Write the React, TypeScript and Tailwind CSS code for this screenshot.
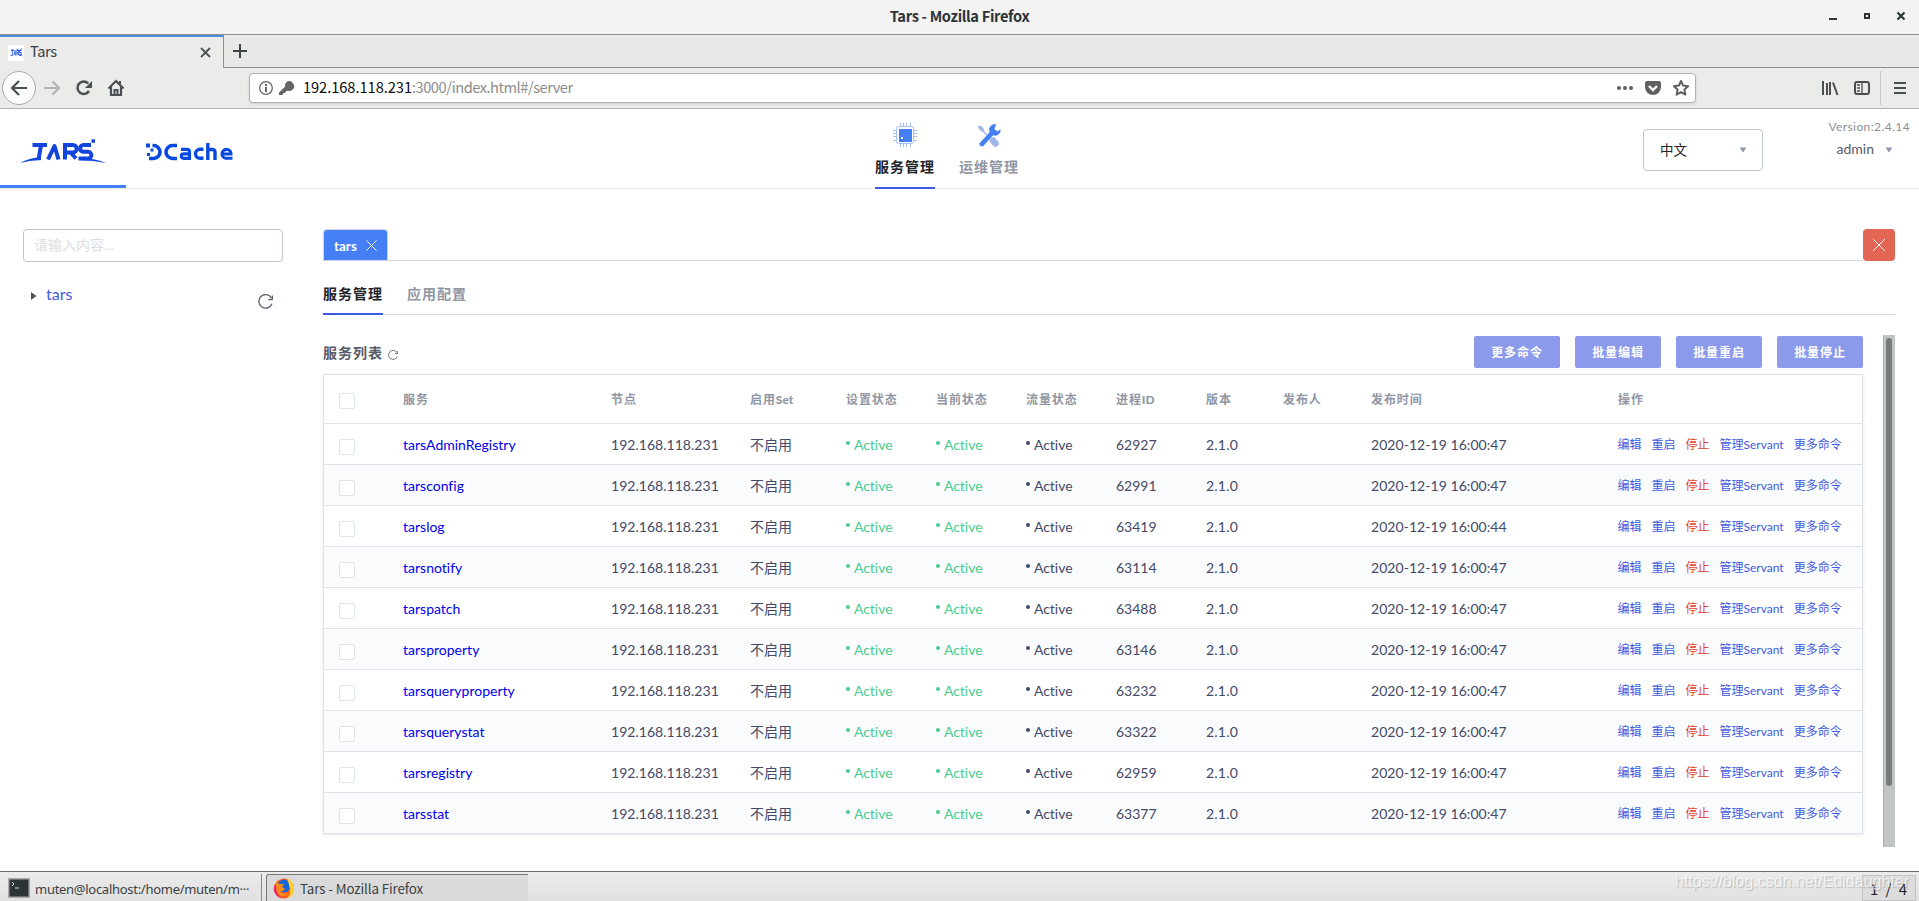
import { ReactNode } from "react";

const rows = [
  ["tarsAdminRegistry", "62927", "47"],
  ["tarsconfig", "62991", "47"],
  ["tarslog", "63419", "44"],
  ["tarsnotify", "63114", "47"],
  ["tarspatch", "63488", "47"],
  ["tarsproperty", "63146", "47"],
  ["tarsqueryproperty", "63232", "47"],
  ["tarsquerystat", "63322", "47"],
  ["tarsregistry", "62959", "47"],
  ["tarsstat", "63377", "47"],
];

const grid =
  "grid grid-cols-[79px_208px_139px_96px_90px_90px_90px_90px_77px_88px_247px_1fr] items-center";

function TitleBar() {
  return (
    <div className="relative flex h-[35px] items-center justify-center border-b border-[#8e8f86] bg-[#f3f3f3] pb-[3px]">
      <span className="font-['Noto_Sans_CJK_SC',sans-serif] text-[14.67px] font-bold leading-5 tracking-[-0.33px] text-[#2e3436]">
        Tars - Mozilla Firefox
      </span>
      <svg className="absolute right-0 top-0" width="100" height="33" fill="none" stroke="#2e3436">
        <path d="M10 19h8" strokeWidth="2" />
        <rect x="46" y="14" width="4" height="4" strokeWidth="2" />
        <path d="M78.500 12.500l7 7M85.500 12.500l-7 7" strokeWidth="2.200" />
      </svg>
    </div>
  );
}

function BrowserTabs() {
  return (
    <div className="flex h-[33px] bg-[#e8e8e7]">
      <div className="flex w-[223px] items-center border-t-2 border-[#4a90d9] bg-[#ebebea] pl-2">
        <span className="flex h-4 w-4 items-center justify-center bg-white">
          <TarsLogo width={15} height={9} />
        </span>
        <span className="mb-[3px] ml-[6px] flex-1 font-['Noto_Sans_CJK_SC',sans-serif] text-[14.67px] leading-5 tracking-[-0.4px] text-[#3a3f42]">
          Tars
        </span>
        <svg className="mr-3" width="11" height="11" stroke="#4d5256" strokeWidth="1.800">
          <path d="M1 1l9 9M10 1l-9 9" />
        </svg>
      </div>
      <div className="flex-1 border-b border-l border-[#8e8f86] pl-[9px] pt-[9px]">
        <svg width="14" height="14" stroke="#3f4548" strokeWidth="2">
          <path d="M7 0v14M0 7h14" />
        </svg>
      </div>
    </div>
  );
}

function Toolbar() {
  return (
    <div className="flex h-[41px] items-center border-b border-[#b4b4ae] bg-[#ebebea] pl-[2px] text-[#4a4f52]">
      <svg width="130" height="36" fill="none" stroke="currentColor" strokeWidth="2.200">
        <circle cx="17" cy="18" r="16.500" fill="#fbfbfb" stroke="#aaaaa6" strokeWidth="1" />
        <path d="M25 18H10.500M17 11l-7 7 7 7" />
        <path d="M42 18H57M50.500 11.500l6.500 6.500-6.500 6.500" stroke="#b3b3b1" />
        <path d="M86.200 13.500A6.200 6.200 0 1 0 87 21" strokeWidth="2.500" />
        <path d="M90 11v7h-7z" fill="currentColor" stroke="none" />
        <path d="M106.500 18.500L114 11l7.500 7.500M109 17v8h10v-8" />
        <path d="M112.500 25v-5h3v5M118 11v3" strokeWidth="2" />
      </svg>
      <div className="ml-[117px] flex h-[30px] w-[1448px] items-center rounded-[4px] border border-[#b1b1ad] bg-white pl-[9px] pr-[5px] font-['Noto_Sans_CJK_SC',sans-serif] text-[14.67px] text-[#8c8c8c] shadow-sm">
        <svg width="36" height="16" className="mr-[8px] text-[#666]">
          <circle cx="7" cy="8" r="6.300" fill="none" stroke="currentColor" strokeWidth="1.300" />
          <path d="M6 7h2v5H6zM6 4h2v2H6z" fill="currentColor" />
          <path d="M32.500 1.500a4.400 4.400 0 0 0-6.300 5L20 12.500V15h3.500l1-2h1.500l1-1.800 2-.5a4.600 4.600 0 0 0 5.500-6.700z" fill="currentColor" />
        </svg>
        <span className="mb-[2px] flex-1 leading-5 tracking-[-0.500px]">
          <span className="tracking-[-0.05px] text-[#0c0c0d]">192.168.118.231</span>:3000/index.html#/server
        </span>
        <svg width="74" height="20" fill="none" stroke="#606060" strokeWidth="2">
          <g fill="#606060" stroke="none">
            <circle cx="3" cy="10" r="2" />
            <circle cx="9" cy="10" r="2" />
            <circle cx="15" cy="10" r="2" />
            <path d="M31 3h12a2 2 0 0 1 2 2v4a8 8 0 0 1-16 0V5a2 2 0 0 1 2-2z" />
          </g>
          <path d="M33 8l4 4 4-4" stroke="#fff" strokeWidth="2.400" />
          <path d="M65 3l2.100 4.600 5 .6-3.700 3.400 1 5-4.400-2.500-4.400 2.500 1-5-3.700-3.400 5-.6z" strokeLinejoin="round" />
        </svg>
      </div>
      <svg width="110" height="36" className="ml-[113px]" fill="none" stroke="currentColor" strokeWidth="2">
        <path d="M14 11v14M18 13v12M21 12v13M24 12.500l4.500 12.500" />
        <rect x="46" y="12" width="14" height="12" rx="2" />
        <path d="M53 12v12M48 15h3M48 18h3M48 21h3" strokeWidth="1.300" />
        <path d="M71.500 1v34" stroke="#c6c6c4" strokeWidth="1" />
        <path d="M85 13h12M85 18h12M85 23h12" />
      </svg>
    </div>
  );
}

function TarsLogo({ width, height }: { width: number; height: number }) {
  return (
    <svg width={width} height={height} viewBox="0 0 86 25" preserveAspectRatio="none" fill="none" stroke="#1344de" strokeWidth="4">
      <path d="M12.500 6H27M21 6L18.500 21" />
      <path d="M28 20.500L34.500 7 38.500 20.500" strokeLinejoin="round" />
      <path d="M45 20.500V6H53a3.500 3.500 0 0 1 0 7.500H47M50.500 13.500l5.500 6" />
      <path d="M71 6H63.500a3.300 3.300 0 0 0 0 6.800h4.500a3.400 3.400 0 0 1 0 6.800H58.500" />
      <path d="M0 24Q9 19 21 18v3Q9 21.500 0 24zM60 18.500Q76 19.500 86 24 73 21.500 60 21z" fill="#1344de" stroke="none" />
      <path d="M71.500 .3h3.500v3.500h-3.500z" fill="#1344de" stroke="none" />
    </svg>
  );
}

function DCacheLogo() {
  return (
    <svg width="88" height="18" fill="none" stroke="#0a49e0" strokeWidth="3.600">
      <path d="M6.500 2.500h1a6.500 6.500 0 0 1 0 13H3" />
      <path d="M31 2.500h-4.500a6.500 6.500 0 0 0 0 13H31" />
      <path d="M35 6.300h6a2.500 2.500 0 0 1 2.500 2.500v6.500h-6a2.200 2.200 0 0 1 0-4.400h6" strokeWidth="3.200" />
      <path d="M57.500 6.300h-3.500a4.500 4.500 0 0 0 0 9h3.500" strokeWidth="3.400" />
      <path d="M61.800 0v17M61.800 6.500h4.700a2.500 2.500 0 0 1 2.500 2.500v8" strokeWidth="3.400" />
      <path d="M86.500 15.300h-7a4.500 4.500 0 1 1 5.500-4.300h-7.500" strokeWidth="3.100" />
      <path d="M0 .5h4v4H0zM4.500 5.500h3v3h-3zM1 10h3v3H1z" fill="#0a49e0" stroke="none" />
    </svg>
  );
}

function Caret({ className }: { className: string }) {
  return (
    <svg width="8" height="6" className={className} fill="#9097a8">
      <path d="M.5 .5h7l-3.500 5z" />
    </svg>
  );
}

function Header() {
  return (
    <header className="flex h-[80px] border-b border-[#ebebee] bg-white">
      <div className="flex h-[79px] w-[126px] border-b-[3px] border-[#457ff5] pl-5 pt-[30px]">
        <TarsLogo width={86} height={25} />
      </div>
      <div className="w-[749px] pl-5 pt-[34px]">
        <DCacheLogo />
      </div>
      <nav className="flex gap-6 whitespace-nowrap text-[14px] font-bold tracking-[1px]">
        <div className="flex h-[80px] w-[60px] flex-col items-center border-b-2 border-[#3f5ae0] pt-[14px] text-[#222329]">
          <svg width="24" height="24" fill="none" stroke="#a3bff5">
            <path d="M7.500 0v3M10.500 0v3M13.500 0v3M17.500 0v3M7.500 21v3M10.500 21v3M13.500 21v3M17.500 21v3M0 7.500h3M0 10.500h3M0 13.500h3M0 17.500h3M21 7.500h3M21 10.500h3M21 13.500h3M21 17.500h3" />
            <rect x="3.500" y="3.500" width="17" height="17" rx="2" />
            <path d="M6 6h13v13H6z" fill="#457ff5" stroke="none" />
            <path d="M8 14h2v2H8z" fill="#fff" stroke="none" />
          </svg>
          <span className="mt-[9px]">服务管理</span>
        </div>
        <div className="flex w-[60px] flex-col items-center pt-[14px] text-[#9096a3]">
          <svg width="24" height="24" fill="none">
            <path d="M3 5l7 7" stroke="#9db7ea" strokeWidth="1.500" />
            <path d="M1 3q3-2 6 3l-1 3Q2 8 1 3z" fill="#9db7ea" />
            <path d="M16 17.500l2.500 3" stroke="#9db7ea" strokeWidth="6.500" strokeLinecap="round" />
            <path d="M5 21L15 10" stroke="#457ff5" strokeWidth="4.800" strokeLinecap="round" />
            <path d="M19 1a6 6 0 0 0-6 9q5 5 9 1 2-2 1.500-5l-3 2.500-3-2.500z" fill="#457ff5" />
          </svg>
          <span className="mt-[9px]">运维管理</span>
        </div>
      </nav>
      <div className="ml-[624px] mt-5 flex h-[42px] w-[120px] items-center rounded border border-[#c0c4cc] pl-[16px] text-[13.500px] text-[#222329]">
        <span className="flex-1">中文</span>
        <Caret className="mr-[15px]" />
      </div>
      <div className="ml-auto mr-[9px] flex flex-col items-end">
        <span className="mt-[9px] text-[12px] leading-[18px] tracking-[0.4px] text-[#8d8f96]">Version:2.4.14</span>
        <span className="mr-[17px] mt-[3px] flex items-center text-[14px] leading-[20px] text-[#565b6a]">
          admin
          <Caret className="ml-[11px] mt-px" />
        </span>
      </div>
    </header>
  );
}

function Refresh({ size, className }: { size: number; className: string }) {
  return (
    <svg width={size} height={size} viewBox="0 0 14 14" className={className} fill="none" stroke="#5f6570" strokeWidth="1.300">
      <path d="M12.500 3.600A6.300 6.300 0 1 0 13 9" />
      <path d="M13.400 1.500v3.600H9.600" />
    </svg>
  );
}

function Sidebar() {
  return (
    <aside className="w-[260px] shrink-0">
      <div className="flex h-[33px] items-center rounded-[4px] border border-[#c0c4d0] pb-[2px] pl-[10px] text-[14px] text-[#dcdde2]">
        请输入内容...
      </div>
      <div className="mt-[21px] flex items-start">
        <svg width="6" height="8" className="ml-[8px] mt-[9px]" fill="#4d5256">
          <path d="M0 0l5.500 4L0 8z" />
        </svg>
        <span className="ml-[9px] flex-1 text-[16px] leading-[22px] text-[#3f5ae0]">tars</span>
        <Refresh size={15} className="mr-[10px] mt-[11px]" />
      </div>
    </aside>
  );
}

function Btn({ children }: { children: ReactNode }) {
  return (
    <button className="h-8 w-[86px] rounded-[2px] bg-[#8b9aeb] pt-[2px] text-[12px] font-bold tracking-[0.9px] text-white">
      {children}
    </button>
  );
}

function Check() {
  return <span className="ml-[15px] mt-[5px] block h-4 w-4 rounded-[2px] border border-[#dfe3ea] bg-white" />;
}

function Status({ on }: { on?: boolean }) {
  return (
    <span className={on ? "flex items-center text-[#49cc8f]" : "flex items-center text-[#434966]"}>
      <i className="mb-[3px] mr-1 block h-1 w-1 rounded-full bg-current" />
      <span className="tracking-[-0.05px]">Active</span>
    </span>
  );
}

function ServiceTable() {
  return (
    <div className="w-[1540px] border border-[#dfe2ea] text-[14px] text-[#434966] shadow-[0_1px_3px_rgba(120,140,170,0.2)]">
      <div className={`${grid} h-[48px] text-[12px] font-bold tracking-[0.9px] text-[#9096a3] [&_b]:tracking-normal [&>span]:pt-[2px]`}>
        <div className="-mt-px">
          <Check />
        </div>
        <span>服务</span>
        <span>节点</span>
        <span>启用<b>Set</b></span>
        <span>设置状态</span>
        <span>当前状态</span>
        <span>流量状态</span>
        <span>进程<b>ID</b></span>
        <span>版本</span>
        <span>发布人</span>
        <span>发布时间</span>
        <span>操作</span>
      </div>
      {rows.map(([name, pid, sec]) => (
        <div key={name} className={`${grid} h-[41px] border-t border-[#dfe2ea] odd:bg-[#fafbfd] even:bg-white`}>
          <Check />
          <span className="tracking-[0.01px] text-[#0000ee]">{name}</span>
          <span className="tracking-[0.03px]">192.168.118.231</span>
          <span>不启用</span>
          <Status on />
          <Status on />
          <Status />
          <span>{pid}</span>
          <span className="tracking-[0.2px]">2.1.0</span>
          <span />
          <span className="tracking-[0.05px]">2020-12-19 16:00:{sec}</span>
          <span className="-ml-[0.5px] flex gap-[10px] whitespace-nowrap pt-[2px] text-[12px] text-[#3f5ae0]">
            <a>编辑</a>
            <a>重启</a>
            <a className="text-[#e0452f]">停止</a>
            <a>管理Servant</a>
            <a>更多命令</a>
          </span>
        </div>
      ))}
    </div>
  );
}

function Main() {
  return (
    <main className="ml-10 w-[1572px]">
      <div className="flex h-8">
        <div className="flex h-8 w-[65px] items-center rounded-t-[4px] border border-[#ccd3e4] bg-[#457ff5] pl-[10px] pt-[3px] text-[13.500px] font-bold text-white">
          tars
          <svg className="mb-[3px] ml-[9px]" width="11" height="11" stroke="#fff">
            <path d="M.5 .5l10 10M10.500 .5l-10 10" />
          </svg>
        </div>
        <div className="flex-1 border-b border-[#d3d6de]" />
        <button className="flex h-8 w-8 items-center justify-center rounded-[4px] bg-[#e36654]">
          <svg width="12" height="12" stroke="#fff">
            <path d="M0 0l12 12M12 0L0 12" />
          </svg>
        </button>
      </div>
      <div className="mt-[13px] flex h-[41px] gap-6 border-b border-[#d3d6de] text-[14px] font-bold leading-[39px] tracking-[1px]">
        <span className="h-[41px] w-[60px] border-b-2 border-[#3f5ae0] text-[#222329]">服务管理</span>
        <span className="text-[#9096a3]">应用配置</span>
      </div>
      <div className="mt-5 flex h-[512px] justify-between">
        <div>
          <div className="flex h-[39px] pt-px">
            <h4 className="flex flex-1 items-center pb-[5px] text-[14px] font-bold tracking-[1px] text-[#565b66]">
              服务列表
              <Refresh size={10} className="ml-[5px] mt-[4px]" />
            </h4>
            <div className="flex gap-[15px]">
              <Btn>更多命令</Btn>
              <Btn>批量编辑</Btn>
              <Btn>批量重启</Btn>
              <Btn>批量停止</Btn>
            </div>
          </div>
          <ServiceTable />
        </div>
        <div className="w-3 border-l border-[#aaadac] bg-[#c3c5c4] pl-[2px] pt-[3px]">
          <div className="h-[448px] w-[6px] rounded-full bg-[#787d7c]" />
        </div>
      </div>
    </main>
  );
}

function Taskbar() {
  return (
    <footer className="relative flex h-[30px] border-t border-[#6b6b69] bg-gradient-to-b from-[#ebebeb] to-[#e1e1e1] font-['Noto_Sans_CJK_SC',sans-serif] text-[13.330px] leading-5 text-[#3a3f42]">
      <div className="mt-[2px] flex w-[262px] items-center whitespace-nowrap border-r border-[#888] pl-2">
        <svg width="22" height="20" className="shrink-0">
          <rect x=".5" y=".5" width="21" height="19" fill="#2d3436" stroke="#a9a9a9" strokeWidth="2" />
          <path d="M4 4l2 2-2 2M7 10h4" stroke="#ddd" fill="none" />
        </svg>
        <span className="ml-[5px] mt-[3px] font-['Noto_Sans'] text-[13px] tracking-[-0.28px]">
          muten@localhost:/home/muten/m···
        </span>
      </div>
      <div className="ml-1 mt-[2px] flex w-[262px] items-center rounded-tl-[3px] border-l border-t border-[#777] bg-[#dadada] pl-[6px]">
        <svg width="22" height="22" viewBox="0 0 22 22">
          <circle cx="11" cy="11.500" r="10" fill="#ff5a1f" />
          <path d="M1.500 8a10 10 0 0 0 7 13.500Q2 16 4 9z" fill="#f0246a" />
          <circle cx="11" cy="9" r="6.500" fill="#1667d9" />
          <path d="M14 1q7 4 7 11t-7 9q4-4 3-9T14 1z" fill="#ffcf2e" />
          <path d="M3 4l3 3h5l-2 3 3 2q-2 3-5 2 4 5 9 1-2 5-8 4-6-3-5-15z" fill="#ff8a16" />
        </svg>
        <span className="ml-[5px] mt-px tracking-[-0.1px]">Tars - Mozilla Firefox</span>
      </div>
      <div className="ml-auto mr-[3px] mt-[3px] flex w-[54px] justify-between border border-[#c4c4c4] bg-[#dcdcdc] pl-[7px] pr-[8px] pt-[3px] text-[15px] text-[#222]">
        <span>1</span>
        <span>/</span>
        <span>4</span>
      </div>
      <span className="absolute right-[10px] top-[-1px] font-['Liberation_Sans'] text-[16px] leading-[22px] text-white/70 [text-shadow:1px_1px_1px_rgba(120,120,120,0.4)]">
        https://blog.csdn.net/Edidaughter
      </span>
    </footer>
  );
}

export default function App() {
  return (
    <div className="flex h-[901px] w-[1919px] flex-col overflow-hidden bg-white font-[Lato,'Noto_Sans_CJK_SC',sans-serif]">
      <TitleBar />
      <BrowserTabs />
      <Toolbar />
      <Header />
      <div className="flex flex-1 pl-[23px] pt-10">
        <Sidebar />
        <Main />
      </div>
      <Taskbar />
    </div>
  );
}
